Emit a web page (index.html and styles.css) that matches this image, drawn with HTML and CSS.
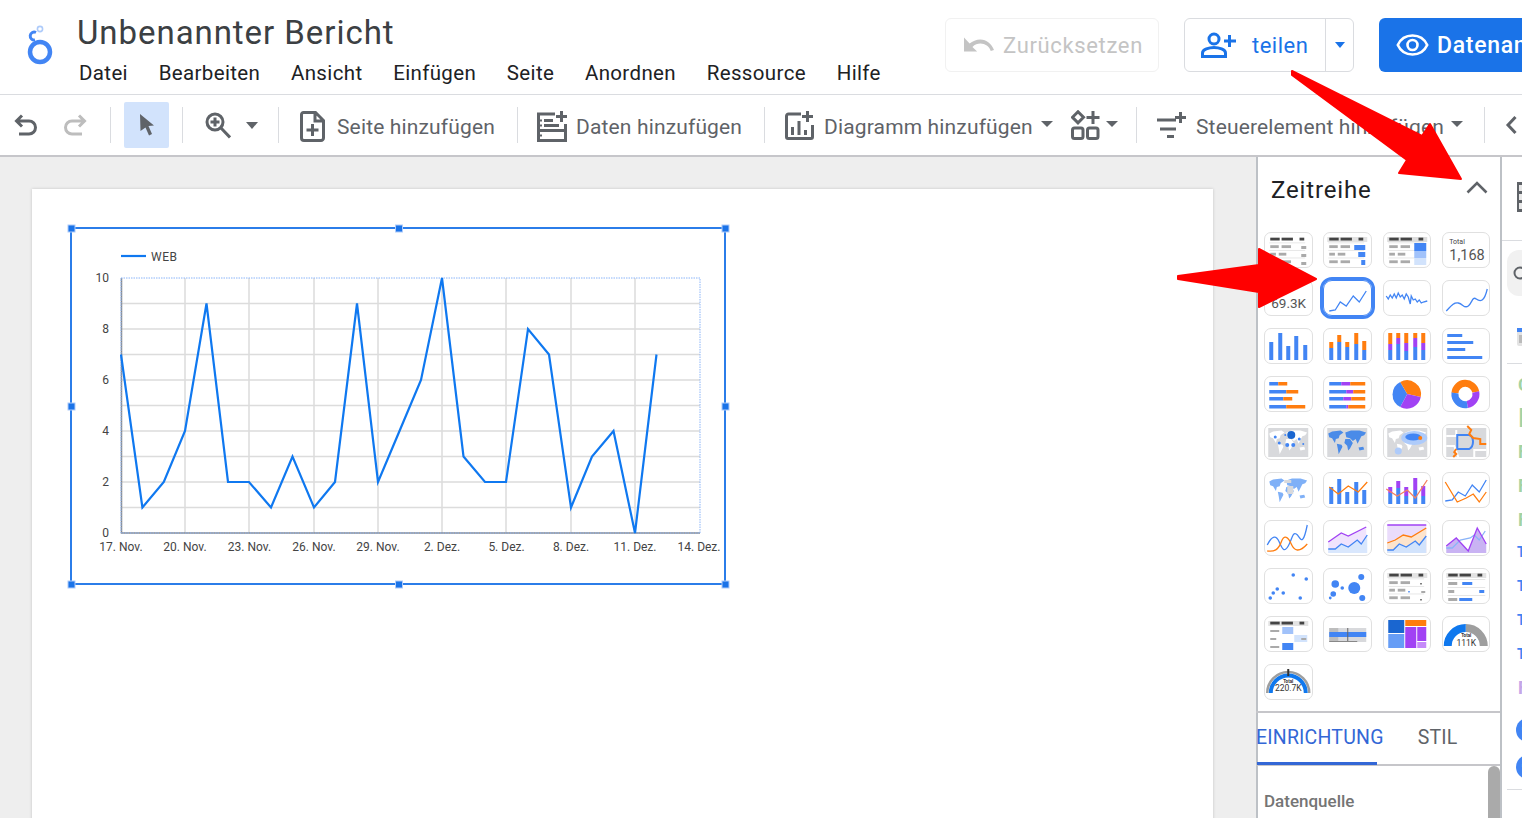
FILE: index.html
```html
<!DOCTYPE html>
<html lang="de">
<head>
<meta charset="utf-8">
<title>Unbenannter Bericht</title>
<link rel="stylesheet" href="styles.css">
</head>
<body>
<svg class="defs" width="0" height="0" aria-hidden="true">
  <defs>
    <symbol id="world" viewBox="0 0 48 36">
      <path d="M5 10 9 8 18 7 21 9 17 12 16 15 13 16 12 20 9 15 6 14Z"/>
      <path d="M14 21 19 22 20 24 17 30 16 32 15 26Z"/>
      <path d="M23 9 29 7 38 7 45 9 43 12 40 13 38 17 36 21 34 16 31 18 28 15 24 14Z"/>
      <path d="M23 16 28 16 31 20 28 26 26 28 25 23 22 20Z"/>
      <path d="M37 25 42 24 43 27 38 28Z"/>
    </symbol>
    <symbol id="thead" viewBox="0 0 48 36">
      <rect x="6" y="6" width="10" height="3" fill="#444"/><rect x="18" y="6" width="12" height="3" fill="#444"/><rect x="37" y="6" width="5" height="3" fill="#444"/>
    </symbol>
    <symbol id="trows" viewBox="0 0 48 36">
      <g fill="#aaa"><rect x="6" y="14" width="9" height="3"/><rect x="18" y="14" width="10" height="3"/><rect x="6" y="22" width="6" height="3"/><rect x="15" y="22" width="8" height="3"/><rect x="6" y="30" width="9" height="3"/><rect x="18" y="30" width="10" height="3"/></g>
      <g fill="#e6e6e6"><rect x="5" y="11" width="38" height="1"/><rect x="5" y="19" width="38" height="1"/><rect x="5" y="27" width="38" height="1"/></g>
    </symbol>
  </defs>
</svg>

<div class="app">
  <header class="topbar">
    <svg class="logo" width="30" height="42" viewBox="0 0 30 42"><circle cx="15" cy="29" r="10" fill="none" stroke="#4285f4" stroke-width="4.5"/><path d="M10 17A4 4 0 1 1 11 9.500" fill="none" stroke="#4285f4" stroke-width="3"/><circle cx="15" cy="6" r="2.600" fill="none" stroke="#aecbfa" stroke-width="1.600"/></svg>
    <div class="doc">
      <div class="doc-title">Unbenannter Bericht</div>
      <nav class="menu">
        <span>Datei</span><span>Bearbeiten</span><span>Ansicht</span><span>Einfügen</span><span>Seite</span><span>Anordnen</span><span>Ressource</span><span>Hilfe</span>
      </nav>
    </div>
    <div class="actions">
      <div class="btn btn-reset">
        <svg width="30" height="18" viewBox="0 0 32 18"><path class="fill-disabled" d="M0 1V16H14L9 11C11.500 8.700 14.500 7.500 17.500 7.500 22.500 7.500 27 10.500 28.500 15.500L32 14.300C29.500 7.500 24 3 17.500 3 13 3 9 4.800 6 7.500Z"/></svg>
        <span>Zurücksetzen</span>
      </div>
      <div class="btn btn-share">
        <div class="share-main">
          <svg width="36" height="26" viewBox="0 0 36 26"><circle cx="13" cy="7" r="5" fill="none" stroke="#1a73e8" stroke-width="3"/><path d="M1.500 24.500V21C1.500 17.500 8 15.500 13 15.500S24.500 17.500 24.500 21V24.500Z" fill="none" stroke="#1a73e8" stroke-width="3"/><path d="M28.500 3V15M23 9H35" stroke="#1a73e8" stroke-width="3"/></svg>
          <span>teilen</span>
        </div>
        <div class="share-drop"><i class="caret caret-blue"></i></div>
      </div>
      <div class="btn btn-view">
        <svg width="33" height="22" viewBox="0 0 33 22"><path d="M1.800 11C4.500 5 10 1.500 16.500 1.500S28.500 5 31.200 11C28.500 17 23 20.500 16.500 20.500S4.500 17 1.800 11Z" fill="none" stroke="#fff" stroke-width="2.600"/><circle cx="16.500" cy="11" r="5" fill="none" stroke="#fff" stroke-width="2.600"/></svg>
        <span>Datenansicht</span>
      </div>
    </div>
  </header>

  <div class="toolbar">
    <div class="group g-history">
      <svg width="24" height="24" viewBox="0 0 24 24"><path class="icon-line" d="M8 2.500 2.500 8 8 13.500M2.500 8H15A6.500 6.500 0 0 1 15 21H5"/></svg>
      <svg width="24" height="24" viewBox="0 0 24 24"><path class="icon-line icon-off" d="M16 2.500 21.500 8 16 13.500M21.500 8H9A6.500 6.500 0 0 0 9 21H19"/></svg>
    </div>
    <i class="sep"></i>
    <div class="group g-select">
      <div class="select-cell"><svg width="16" height="24" viewBox="0 0 16 24"><path d="M1 1 15 12.500 9.500 13 13 21 10 22.500 6.500 14.500 1.500 18Z" fill="#5f6368"/></svg></div>
    </div>
    <i class="sep"></i>
    <div class="group g-zoom">
      <svg width="26" height="27" viewBox="0 0 26 27"><circle cx="10" cy="10" r="8" fill="none" stroke="#5f6368" stroke-width="3"/><path d="M16 16 25 25.500M10 5.500V14.500M5.500 10H14.500" fill="none" stroke="#5f6368" stroke-width="3"/></svg>
      <i class="caret caret-lg"></i>
    </div>
    <i class="sep"></i>
    <div class="group g-page">
      <svg class="nudge" width="25" height="31" viewBox="0 0 25 31"><path class="icon-line" d="M3.500 1.500H15.500L23.500 9.500V27A2.500 2.500 0 0 1 21 29.500H4A2.500 2.500 0 0 1 1.500 27V3.500A2 2 0 0 1 3.500 1.500ZM15 2V10H23M12.500 13V25M6.500 19H18.500"/></svg>
      <span class="tool-label">Seite hinzufügen</span>
    </div>
    <i class="sep"></i>
    <div class="group g-data">
      <svg class="nudge" width="31" height="31" viewBox="0 0 31 31"><path class="icon-line" d="M19 3H2.500V29.500H29.500V13M2.500 19.500H29.500M8 9.500H17M8 14.500H23"/><path class="icon-line" d="M25.500 0V11M20 5.500H31"/><path d="M4 8.500h2v2H4zM4 13.500h2v2H4zM4 23.500h2v2H4z" fill="#5f6368"/></svg>
      <span class="tool-label">Daten hinzufügen</span>
    </div>
    <i class="sep"></i>
    <div class="group g-chart">
      <svg width="29" height="29" viewBox="0 0 29 29"><path class="icon-line" d="M16 3H3.500A2 2 0 0 0 1.500 5V26A1.500 1.500 0 0 0 3 27.500H26A1.500 1.500 0 0 0 27.500 26V14"/><path class="icon-line" d="M22.500 0V11M17 5.500H28M7.500 24V16M14 24V10M20.500 24V19"/></svg>
      <span class="tool-label">Diagramm hinzufügen</span>
      <i class="caret caret-md"></i>
      <svg class="comp-icon" width="29" height="30" viewBox="0 0 29 30"><path class="icon-line" d="M7 1.800 12.500 7.300 7 12.800 1.500 7.300ZM22 1V14M15.500 7.500H28.500"/><rect class="icon-line" x="1.500" y="18" width="10.500" height="10.500" rx="2"/><rect class="icon-line" x="16.500" y="18" width="10.500" height="10.500" rx="2"/></svg>
      <i class="caret caret-md caret-comp"></i>
    </div>
    <i class="sep"></i>
    <div class="group g-ctrl">
      <svg width="29" height="26" viewBox="0 0 29 26"><path class="icon-line" d="M0 8H19M3 17H19M10 24.500H17M23.500 0V11M18 5.500H29"/></svg>
      <span class="tool-label">Steuerelement hinzufügen</span>
      <i class="caret caret-md"></i>
    </div>
    <i class="sep"></i>
    <svg class="collapse" width="12" height="22" viewBox="0 0 12 22"><path class="icon-line" d="M10.500 3 3 11 10.500 19"/></svg>
  </div>

  <main class="workspace">
    <section class="canvas">
      <div class="page">
        <svg class="chart" width="680" height="376" viewBox="60 218 680 376">
          <g class="grid-soft">
            <path d="M185 278V533M249 278V533M314 278V533M378 278V533M442 278V533M506 278V533M571 278V533M635 278V533"/>
            <path d="M121 303.500H700M121 329H700M121 354.500H700M121 380H700M121 405.500H700M121 431H700M121 456.500H700M121 482H700M121 507.500H700"/>
          </g>
          <path class="axis" d="M121.500 278V533H700"/>
          <rect class="plot-edge" x="121" y="278" width="579" height="255"/>
          <polyline class="series" points="121,354.500 142.400,507.500 163.800,482 185,431 206.500,303.500 228,482 249,482 271,507.500 292.500,456.500 314,507.500 335,482 357,303.500 378,482 399.500,431 421,380 442,278 463.500,456.500 485,482 506,482 528,329 549,354.500 571,507.500 592,456.500 613.500,431 635,533 656.500,354.500"/>
          <path class="series" d="M121 256H146"/>
          <text class="chart-text legend-text" x="151" y="261">WEB</text>
          <g class="chart-text y-labels">
            <text x="109" y="282">10</text><text x="109" y="333">8</text><text x="109" y="384">6</text><text x="109" y="435">4</text><text x="109" y="486">2</text><text x="109" y="537">0</text>
          </g>
          <g class="chart-text x-labels">
            <text x="121" y="551">17. Nov.</text><text x="185" y="551">20. Nov.</text><text x="249.500" y="551">23. Nov.</text><text x="314" y="551">26. Nov.</text><text x="378" y="551">29. Nov.</text><text x="442" y="551">2. Dez.</text><text x="506.500" y="551">5. Dez.</text><text x="571" y="551">8. Dez.</text><text x="635" y="551">11. Dez.</text><text x="699" y="551">14. Dez.</text>
          </g>
          <rect class="frame" x="71" y="228" width="654" height="356"/>
          <g class="handles">
            <rect x="68" y="225" width="7" height="7"/><rect x="395.500" y="225" width="7" height="7"/><rect x="722" y="225" width="7" height="7"/>
            <rect x="68" y="403" width="7" height="7"/><rect x="722" y="403" width="7" height="7"/>
            <rect x="68" y="581" width="7" height="7"/><rect x="395.500" y="581" width="7" height="7"/><rect x="722" y="581" width="7" height="7"/>
          </g>
        </svg>
      </div>
    </section>

    <aside class="panel">
      <div class="panel-head">
        <h2>Zeitreihe</h2>
        <svg width="22" height="13" viewBox="0 0 22 13"><path d="M1.500 11.500 11 2 20.500 11.500" fill="none" stroke="#5f6368" stroke-width="2.600"/></svg>
      </div>
      <div class="tiles">
        <div class="tile"><svg viewBox="1 1 46 34"><use href="#thead"/><use href="#trows"/><rect x="37" y="14" width="5" height="3" fill="#aaa"/><rect x="37" y="22" width="5" height="3" fill="#aaa"/><rect x="37" y="30" width="5" height="3" fill="#aaa"/></svg></div>
        <div class="tile"><svg viewBox="1 1 46 34"><rect x="4" y="5" width="40" height="5" fill="#e3e3e3"/><use href="#thead"/><use href="#trows"/><rect x="31" y="13" width="11" height="5" fill="#4285f4"/><rect x="35" y="20" width="7" height="5" fill="#4285f4"/><rect x="38" y="28" width="4" height="5" fill="#4285f4"/></svg></div>
        <div class="tile"><svg viewBox="1 1 46 34"><rect x="4" y="5" width="40" height="5" fill="#ddd"/><use href="#thead"/><use href="#trows"/><rect x="31" y="11" width="12" height="8" fill="#4285f4"/><rect x="31" y="19" width="12" height="7" fill="#a1c2fa"/><rect x="31" y="26" width="12" height="7" fill="#d2e3fc"/></svg></div>
        <div class="tile"><svg viewBox="1 1 46 34"><text class="t-small" x="7" y="12">Total</text><text class="t-big" x="7" y="28">1,168</text></svg></div>

        <div class="tile"><svg viewBox="1 1 46 34"><text class="t-small" x="7" y="12">Total</text><text class="t-mid" x="7" y="27.500">69.3K</text></svg></div>
        <div class="tile tile-on"><svg viewBox="1 1 46 34"><polyline class="l-blue" points="6,31 12,30 17,22 23,26 30,16 36,22 43,11"/></svg></div>
        <div class="tile"><svg viewBox="1 1 46 34"><polyline class="l-blue" points="3,16 5,19 7,15 9,18 11,14 13,18 15,13 17,17 19,15 21,19 23,14 25,17 27,24 28,16 30,20 32,19 34,22 36,20 38,23 40,22 44,21"/></svg></div>
        <div class="tile"><svg viewBox="1 1 46 34"><path class="l-blue" d="M4 31C8 27 11 22 16 23S22 29 26 26 30 16 34 19 42 22 45 9"/></svg></div>

        <div class="tile"><svg viewBox="1 1 46 34"><g class="f-blue"><rect x="5" y="14" width="4" height="18"/><rect x="14" y="5" width="4" height="27"/><rect x="22" y="18" width="4" height="14"/><rect x="30" y="8" width="4" height="24"/><rect x="39" y="17" width="4" height="15"/></g></svg></div>
        <div class="tile"><svg viewBox="1 1 46 34"><g class="f-blue"><rect x="6" y="20" width="4" height="12"/><rect x="14" y="14" width="4" height="18"/><rect x="22" y="19" width="4" height="13"/><rect x="31" y="16" width="4" height="16"/><rect x="39" y="22" width="4" height="10"/></g><g class="f-orange"><rect x="6" y="14" width="4" height="6"/><rect x="14" y="7" width="4" height="7"/><rect x="22" y="14" width="4" height="5"/><rect x="31" y="5" width="4" height="11"/><rect x="39" y="13" width="4" height="9"/></g></svg></div>
        <div class="tile"><svg viewBox="1 1 46 34"><g class="f-orange"><rect x="5" y="5" width="4" height="11"/><rect x="13" y="5" width="4" height="5"/><rect x="21" y="5" width="4" height="10"/><rect x="30" y="5" width="4" height="5"/><rect x="38" y="5" width="4" height="10"/></g><g class="f-purple"><rect x="5" y="16" width="4" height="6"/><rect x="13" y="10" width="4" height="6"/><rect x="21" y="15" width="4" height="8"/><rect x="30" y="10" width="4" height="9"/><rect x="38" y="15" width="4" height="7"/></g><g class="f-blue"><rect x="5" y="22" width="4" height="10"/><rect x="13" y="16" width="4" height="16"/><rect x="21" y="23" width="4" height="9"/><rect x="30" y="19" width="4" height="13"/><rect x="38" y="22" width="4" height="10"/></g></svg></div>
        <div class="tile"><svg viewBox="1 1 46 34"><g class="f-blue"><rect x="5" y="6" width="15" height="3"/><rect x="5" y="13" width="26" height="3"/><rect x="5" y="20" width="18" height="3"/><rect x="5" y="28" width="35" height="3"/></g></svg></div>

        <div class="tile"><svg viewBox="1 1 46 34"><g class="f-blue"><rect x="5" y="6" width="9" height="3.500"/><rect x="5" y="14" width="17" height="3.500"/><rect x="5" y="21" width="14" height="3.500"/><rect x="5" y="29" width="17" height="3.500"/></g><g class="f-orange"><rect x="14" y="6" width="9" height="3.500"/><rect x="22" y="14" width="12" height="3.500"/><rect x="19" y="21" width="9" height="3.500"/><rect x="22" y="29" width="19" height="3.500"/></g></svg></div>
        <div class="tile"><svg viewBox="1 1 46 34"><g class="f-blue"><rect x="6" y="6" width="12" height="3.500"/><rect x="6" y="14" width="17" height="3.500"/><rect x="6" y="21" width="14" height="3.500"/><rect x="6" y="29" width="17" height="3.500"/></g><g class="f-purple"><rect x="18" y="6" width="9" height="3.500"/><rect x="23" y="14" width="7" height="3.500"/><rect x="20" y="21" width="8" height="3.500"/><rect x="23" y="29" width="2" height="3.500"/></g><g class="f-orange"><rect x="27" y="6" width="15" height="3.500"/><rect x="30" y="14" width="12" height="3.500"/><rect x="28" y="21" width="14" height="3.500"/><rect x="25" y="29" width="17" height="3.500"/></g></svg></div>
        <div class="tile"><svg viewBox="1 1 46 34"><path class="f-blue" d="M24 18 17 31A14 14 0 0 1 17 6Z"/><path class="f-orange" d="M24 18 17 6A14 14 0 0 1 37.500 21Z"/><path class="f-purple" d="M24 18 37.500 21A14 14 0 0 1 17 31Z"/></svg></div>
        <div class="tile"><svg viewBox="1 1 46 34"><g fill="none" stroke-width="7"><path stroke="#ff7d0f" d="M12.700 17A10.500 10.500 0 0 1 33.500 16"/><path stroke="#a142f4" d="M33.500 16A10.500 10.500 0 0 1 25 28.500"/><path stroke="#4285f4" d="M25 28.500A10.500 10.500 0 0 1 12.700 17"/></g></svg></div>

        <div class="tile"><svg viewBox="1 1 46 34"><rect x="4" y="4" width="40" height="29" fill="#d8d9dc"/><use href="#world" class="land"/><g class="f-blue"><circle cx="27" cy="11" r="4" fill="#1a66d0"/><circle cx="11" cy="13" r="1.500"/><circle cx="15" cy="19" r="1.500"/><circle cx="23" cy="21" r="2"/><circle cx="29" cy="21" r="2"/><circle cx="35" cy="15" r="1.500"/><circle cx="39" cy="20" r="1"/><circle cx="21" cy="11" r="1"/></g></svg></div>
        <div class="tile"><svg viewBox="1 1 46 34"><rect x="4" y="4" width="40" height="29" fill="#d8d9dc"/><use href="#world" class="land-blue"/></svg></div>
        <div class="tile"><svg viewBox="1 1 46 34"><rect x="4" y="4" width="40" height="29" fill="#d8d9dc"/><use href="#world" class="land"/><ellipse cx="31" cy="14" rx="13" ry="7" fill="#aecbfa"/><ellipse cx="30" cy="13" rx="8" ry="3.500" fill="#4285f4"/><circle cx="37" cy="14" r="2" fill="#ff7d0f"/><circle cx="15" cy="27" r="3.500" fill="#aecbfa"/></svg></div>
        <div class="tile"><svg viewBox="1 1 46 34"><rect x="4" y="4" width="40" height="29" fill="#d8d9dc"/><path d="M4 12H14V6M32 33V26H44M4 22H12L16 33" fill="none" stroke="#fff" stroke-width="2"/><path d="M15 11H27C32 13 32 22 27 25H15Z" fill="none" stroke="#4285f4" stroke-width="2"/><path d="M25 2 29 6 27 10 31 14 38 15V20H44M14 25 12 28 14 30 11 33" fill="none" stroke="#ff7d0f" stroke-width="2"/></svg></div>

        <div class="tile"><svg viewBox="1 1 46 34"><use href="#world" class="land-mix"/><g fill="#d8d9dc"><rect x="20" y="8" width="7" height="3"/><rect x="23" y="14" width="6" height="8"/></g></svg></div>
        <div class="tile"><svg viewBox="1 1 46 34"><g class="f-blue"><rect x="6" y="15" width="4" height="17"/><rect x="14" y="7" width="4" height="25"/><rect x="22" y="20" width="4" height="12"/><rect x="31" y="10" width="4" height="22"/><rect x="39" y="18" width="4" height="14"/></g><polyline class="l-orange" points="6,15 15,22 25,14 35,20 44,10"/></svg></div>
        <div class="tile"><svg viewBox="1 1 46 34"><g class="f-blue"><rect x="5" y="21" width="4" height="11"/><rect x="13" y="16" width="4" height="16"/><rect x="21" y="24" width="4" height="8"/><rect x="30" y="18" width="4" height="14"/><rect x="38" y="24" width="4" height="8"/></g><g class="f-purple"><rect x="5" y="15" width="4" height="6"/><rect x="13" y="9" width="4" height="7"/><rect x="21" y="15" width="4" height="9"/><rect x="30" y="6" width="4" height="12"/><rect x="38" y="14" width="4" height="10"/></g><polyline class="l-salmon" points="3,17 14,24 24,18 32,26 44,8"/></svg></div>
        <div class="tile"><svg viewBox="1 1 46 34"><polyline class="l-blue" points="3,29 10,28 16,20 23,24 30,13 37,20 44,8"/><polyline class="l-orange" points="3,10 15,30 24,26 31,22 37,30 44,20"/></svg></div>

        <div class="tile"><svg viewBox="1 1 46 34"><path class="l-blue" d="M3 25C8 15 12 15 15 22S20 33 24 26 28 12 32 14 38 30 43 5"/><path class="l-orange" d="M3 31C10 32 14 30 17 22S24 17 27 24 35 33 43 24"/></svg></div>
        <div class="tile"><svg viewBox="1 1 46 34"><path d="M5 22 18 13 25 16 43 7V33H5Z" fill="#f0e3fd"/><path d="M5 29 12 29 18 24 25 27 34 20 38 24 44 15V33H5Z" fill="#d9e7fd"/><polyline class="l-purple" points="5,22 18,13 25,16 43,7"/><polyline class="l-blue" points="5,29 12,29 18,24 25,27 34,20 38,24 44,15"/></svg></div>
        <div class="tile"><svg viewBox="1 1 46 34"><rect x="4" y="5" width="39" height="28" fill="#eadcfb"/><path d="M4 23 12 20 20 15 28 17 43 8V33H4Z" fill="#fde4cd"/><path d="M4 30 10 30 16 24 23 27 32 21 36 25 43 16V33H4Z" fill="#d2e3fc"/><path class="l-purple" d="M4 5H43"/><polyline class="l-orange" points="4,23 12,20 20,15 28,17 43,8"/><polyline class="l-blue" points="4,30 10,30 16,24 23,27 32,21 36,25 43,16"/></svg></div>
        <div class="tile"><svg viewBox="1 1 46 34"><path d="M4 26 14 18 26 31 35 8 44 24V33H4Z" fill="#c9b3f3"/><polyline class="l-light" points="4,28 10,28 18,20 28,18 32,15 37,20 43,11"/><polyline class="l-purple" points="4,26 14,18 26,31 35,8 44,24"/></svg></div>

        <div class="tile"><svg viewBox="1 1 46 34"><g class="f-blue"><circle cx="29" cy="7" r="1.800"/><circle cx="42" cy="11" r="1.800"/><circle cx="13" cy="21" r="1.800"/><circle cx="19" cy="25" r="1.800"/><circle cx="9" cy="25" r="1.800"/><circle cx="6" cy="30" r="1.800"/><circle cx="36" cy="30" r="1.800"/></g></svg></div>
        <div class="tile"><svg viewBox="1 1 46 34"><g class="f-blue"><circle cx="38" cy="9" r="3"/><circle cx="12" cy="16" r="3.800"/><circle cx="31" cy="20" r="6"/><circle cx="19" cy="20" r="1.800"/><circle cx="10" cy="26" r="2.800"/><circle cx="39" cy="30" r="3"/><circle cx="7" cy="30" r="1.400"/></g></svg></div>
        <div class="tile"><svg viewBox="1 1 46 34"><rect x="4" y="5" width="40" height="5" fill="#e3e3e3"/><use href="#thead"/><use href="#trows"/><rect x="37" y="15" width="1.500" height="1.500" fill="#555"/><rect x="25" y="23" width="1.500" height="1.500" fill="#4285f4"/><rect x="38" y="23" width="4" height="2" fill="#aaa"/><rect x="37" y="31" width="1.500" height="1.500" fill="#555"/></svg></div>
        <div class="tile"><svg viewBox="1 1 46 34"><rect x="4" y="5" width="40" height="5" fill="#e3e3e3"/><use href="#thead"/><g fill="#aaa"><rect x="6" y="14" width="9" height="3"/><rect x="6" y="22" width="6" height="3"/><rect x="6" y="30" width="9" height="3"/></g><g class="f-blue"><rect x="20" y="14" width="10" height="3"/><rect x="37" y="22" width="5" height="3"/><rect x="17" y="30" width="13" height="3"/></g><g fill="#e6e6e6"><rect x="5" y="11" width="38" height="1"/><rect x="5" y="19" width="38" height="1"/><rect x="5" y="27" width="38" height="1"/></g></svg></div>

        <div class="tile"><svg viewBox="1 1 46 34"><rect x="4" y="5" width="40" height="5" fill="#e3e3e3"/><use href="#thead"/><rect x="18" y="11" width="11" height="7" fill="#a1c2fa"/><rect x="30" y="19" width="13" height="7" fill="#d2e3fc"/><rect x="18" y="27" width="11" height="7" fill="#4285f4"/><g fill="#aaa"><rect x="6" y="14" width="9" height="2"/><rect x="6" y="22" width="6" height="2"/><rect x="6" y="30" width="9" height="2"/><rect x="37" y="22" width="5" height="2"/></g></svg></div>
        <div class="tile"><svg viewBox="1 1 46 34"><rect x="6" y="12" width="37" height="14" fill="#d8d9dc"/><rect x="6" y="12" width="9" height="14" fill="#bdbdbd"/><rect x="6" y="16" width="37" height="5" fill="#4285f4"/><rect x="24" y="12" width="1" height="14" fill="#666"/><rect x="6" y="25" width="28" height="1" fill="#888"/></svg></div>
        <div class="tile"><svg viewBox="1 1 46 34"><rect x="5" y="4" width="16" height="13" fill="#1a66d0"/><rect x="22" y="4" width="21" height="6" fill="#ff7d0f"/><rect x="5" y="18" width="16" height="14" fill="#669df6"/><rect x="22" y="11" width="11" height="21" fill="#a142f4"/><rect x="34" y="11" width="9" height="14" fill="#a142f4"/><rect x="34" y="26" width="9" height="6" fill="#c58af9"/></svg></div>
        <div class="tile"><svg viewBox="1 1 46 34"><path d="M23.500 12A18 18 0 0 1 41.500 30" fill="none" stroke="#9e9e9e" stroke-width="8"/><path d="M5.500 30A18 18 0 0 1 23.500 12" fill="none" stroke="#0f78ee" stroke-width="8"/><text class="t-tiny" x="24" y="21">Total</text><text class="t-gauge" x="24" y="30">111K</text></svg></div>

        <div class="tile"><svg viewBox="1 1 46 34"><path d="M3 29A21 21 0 0 1 45 29" fill="none" stroke="#9e9e9e" stroke-width="2.500"/><path d="M6.500 29A17.500 17.500 0 0 1 41.500 29" fill="none" stroke="#0f78ee" stroke-width="4"/><rect x="23" y="5" width="2" height="7" fill="#333"/><text class="t-tiny" x="24" y="19">Total</text><text class="t-gauge" x="24" y="27">220.7K</text></svg></div>
      </div>
      <div class="tabs">
        <div class="tab tab-on">EINRICHTUNG</div>
        <div class="tab">STIL</div>
      </div>
      <div class="panel-body">
        <h3>Datenquelle</h3>
        <div class="scrollthumb"></div>
      </div>
    </aside>

    <aside class="rail">
      <div class="rail-top"><svg width="8" height="30" viewBox="0 0 8 30"><rect width="8" height="30" fill="#5f6368"/><path d="M2 3h6v6H2zM2 12h6v6H2zM2 21h6v6H2z" fill="#e8e8e8"/></svg></div>
      <div class="rail-search"><svg width="12" height="16" viewBox="0 0 12 16"><circle cx="8" cy="8" r="5.500" fill="none" stroke="#5f6368" stroke-width="2"/></svg></div>
      <div class="rail-source"><svg width="8" height="20" viewBox="0 0 8 20"><rect y="1" width="8" height="18" rx="2" fill="#e3e3e3"/><rect y="1" width="8" height="4" fill="#4285f4"/><rect x="2" y="8" width="6" height="8" fill="#bbb"/></svg></div>
      <ul class="fields">
        <li class="fld-green">C</li><li class="fld-green fld-bar">I</li><li class="fld-green">F</li><li class="fld-green">F</li><li class="fld-green">F</li>
        <li class="fld-blue">T</li><li class="fld-blue">T</li><li class="fld-blue">T</li><li class="fld-blue">T</li><li class="fld-purple">F</li>
      </ul>
      <div class="adders"><span class="adder">+</span><span class="adder">+</span></div>
      <div class="rail-foot"></div>
    </aside>
  </main>

  <svg class="arrows" width="1522" height="818" viewBox="0 0 1522 818" aria-hidden="true">
    <polygon points="1292,71 1422,136 1430,124 1461,179 1399,173 1407,160 1292,75"/>
    <polygon points="1178,276 1259,265 1259,249 1316,279 1259,307 1259,292 1178,279"/>
  </svg>
</div>
</body>
</html>
```

FILE: styles.css
```css
* { box-sizing: border-box; }
html, body { margin: 0; height: 100%; overflow: hidden; background: #fff; }
body { font-family: Roboto, "Liberation Sans", sans-serif; color: #3c4043; }
.defs { position: absolute; }
.app { position: relative; width: 1522px; height: 818px; display: flex; flex-direction: column; overflow: hidden; }

/* top bar */
.topbar { flex: none; height: 95px; display: flex; border-bottom: 1px solid #dadce0; padding-left: 25px; }
.logo { margin-top: 23px; flex: none; }
.doc { margin-left: 22px; padding-top: 12px; }
.doc-title { font-size: 33px; line-height: 42px; color: #3c4043; letter-spacing: .95px; }
.menu { display: flex; gap: 30.700px; padding-left: 2px; margin-top: 4px; font-size: 20.500px; line-height: 30px; color: #202124; letter-spacing: .36px; }
.actions { position: absolute; top: 18px; left: 945px; right: 0; display: flex; gap: 25px; }
.btn { flex: none; height: 54px; display: flex; align-items: center; border-radius: 6px; font-size: 22px; }
.btn svg { flex: none; }
.btn-reset { width: 214px; border: 1px solid #f1f1f1; padding-left: 18px; gap: 9px; color: #c4c4c4; letter-spacing: .65px; }
.fill-disabled { fill: #c4c4c4; }
.btn-share { width: 170px; border: 1px solid #dadce0; color: #1a73e8; letter-spacing: .5px; }
.share-main { flex: none; width: 141px; height: 100%; display: flex; align-items: center; gap: 15px; padding-left: 16px; border-right: 1px solid #dadce0; }
.share-drop { flex: 1; display: flex; justify-content: center; }
.btn-view { width: 170px; background: #1a73e8; color: #fff; padding-left: 17px; gap: 8px; font-size: 23px; letter-spacing: .7px; font-weight: 500; white-space: nowrap; border-radius: 6px 0 0 6px; }

/* carets */
.caret { display: block; flex: none; width: 0; height: 0; border-style: solid; border-color: #5f6368 transparent transparent; border-width: 6px 6px 0; }
.caret-blue { border-top-color: #1a73e8; border-width: 6px 5.500px 0; }
.caret-lg { margin-left: 15px; border-width: 7px 6.500px 0; }
.caret-md { margin-left: 8px; margin-top: -2px; }
.caret-comp { margin-left: 6px; }

/* toolbar */
.toolbar { flex: none; height: 62px; display: flex; align-items: center; border-bottom: 2px solid #c6c6ca; white-space: nowrap; }
.group { height: 100%; display: flex; align-items: center; flex: none; }
.group svg { flex: none; }
.sep { flex: none; width: 1px; height: 36px; background: #dadce0; }
.g-history { width: 110px; padding-left: 14px; gap: 25px; }
.g-select { width: 71px; padding-left: 13px; }
.g-zoom { width: 95px; padding-left: 22px; }
.g-page { width: 238px; padding-left: 21px; gap: 12px; }
.g-data { width: 246px; padding-left: 18px; gap: 9px; }
.g-chart { width: 371px; padding-left: 20px; }
.g-chart .tool-label { margin-left: 10px; width: 209px; }
.comp-icon { margin-left: 18px; }
.g-ctrl { width: 347px; padding-left: 20px; }
.g-ctrl .tool-label { margin-left: 10px; width: 247px; }
.tool-label { font-size: 21px; line-height: 26px; padding-top: 4px; letter-spacing: .15px; color: #5f6368; }
.nudge { margin-top: 2px; }
.select-cell { width: 45px; height: 46px; border-radius: 2px; background: #d2e3fc; display: flex; align-items: center; justify-content: center; }
.icon-line { fill: none; stroke: #5f6368; stroke-width: 3; }
.icon-off { stroke: #bdbdbd; }
.collapse { margin-left: 20px; flex: none; }

/* workspace */
.workspace { flex: 1; min-height: 0; display: flex; }
.canvas { flex: none; width: 1256px; background: #eee; padding: 32px 0 0 32px; overflow: hidden; }
.page { position: relative; width: 1181px; height: 800px; background: #fff; box-shadow: 0 0 3px rgba(0, 0, 0, .18); }
.chart { position: absolute; left: 28px; top: 29px; }
.grid-soft path { fill: none; stroke: #dcdcdc; stroke-width: 1.500; }
.plot-edge { fill: none; stroke: #8ab4f8; stroke-width: 1; stroke-dasharray: 1.500 1; }
.axis { fill: none; stroke: #888; stroke-width: 1.500; }
.series { fill: none; stroke: #0f78f0; stroke-width: 2.200; }
.chart-text { font-size: 12px; fill: #444; font-family: Roboto, sans-serif; }
.legend-text { letter-spacing: .5px; }
.y-labels { text-anchor: end; }
.x-labels { text-anchor: middle; }
.frame { fill: none; stroke: #2b7de9; stroke-width: 2; }
.handles rect { fill: #1a73e8; stroke: #aecbfa; stroke-width: 1; }

/* chart-type panel */
.panel { flex: none; width: 244px; border-left: 2px solid #bdc1c6; display: flex; flex-direction: column; min-height: 0; background: #fff; }
.panel-head { height: 75px; flex: none; display: flex; align-items: flex-start; justify-content: space-between; padding: 19px 12px 0 13px; }
.panel-head h2 { margin: 0; font-size: 24px; line-height: 28px; font-weight: 400; color: #202124; letter-spacing: .85px; }
.panel-head svg { margin-top: 5px; }
.tiles { flex: none; display: grid; grid-template-columns: repeat(4, 48.500px); grid-auto-rows: 36px; column-gap: 10.800px; row-gap: 12px; padding-left: 6px; height: 479px; align-content: start; }
.tile { border: 1px solid #e0e0e0; border-radius: 7px; background: #fff; overflow: hidden; }
.tile svg { display: block; width: 100%; height: 34px; }
.tile-on { outline: 3px solid #4285f4; border-radius: 9px; border-color: #4285f4; }
.t-small { font-size: 7px; fill: #444; }
.t-big { font-size: 14.500px; fill: #555; }
.t-mid { font-size: 13.500px; fill: #555; }
.t-tiny { font-size: 4.500px; font-weight: 700; fill: #333; text-anchor: middle; }
.t-gauge { font-size: 8.500px; fill: #333; text-anchor: middle; }
.f-blue { fill: #4285f4; }
.f-orange { fill: #ff7d0f; }
.f-purple { fill: #a142f4; }
.l-blue, .l-orange, .l-purple, .l-salmon, .l-light { fill: none; stroke-width: 1.300; }
.l-blue { stroke: #4285f4; }
.l-orange { stroke: #ff7d0f; }
.l-purple { stroke: #a142f4; }
.l-salmon { stroke: #f48060; }
.l-light { stroke: #8ab4f8; }
.land { fill: #fff; }
.land-blue { fill: #4a8be8; }
.land-mix { fill: #7fb0f7; }

.tabs { flex: none; height: 55px; display: flex; margin-left: -2px; padding-left: 2px; border-top: 2px solid #c6c6ca; border-bottom: 2px solid #c6c6ca; font-size: 19.500px; line-height: 50px; color: #5f6368; letter-spacing: .2px; }
.tab { margin-right: 34px; }
.tab:first-child { margin-left: -2px; }
.tab-on { position: relative; color: #3367d6; }
.tab-on::after { content: ""; position: absolute; left: 1px; bottom: -1px; width: 120px; height: 3px; background: #3367d6; }
.panel-body { position: relative; flex: 1; min-height: 0; padding: 25px 0 0 6px; overflow: hidden; }
.panel-body h3 { margin: 0; font-size: 17px; line-height: 20px; font-weight: 500; color: #757575; }
.scrollthumb { position: absolute; right: 0; top: 0; width: 12px; height: 70px; border-radius: 6px; background: #aaa; }

/* clipped right rail */
.rail { flex: 1; min-width: 0; border-left: 2px solid #bdc1c6; overflow: hidden; background: #fff; }
.rail-top { height: 84px; padding: 25px 0 0 15px; border-bottom: 1px solid #dadce0; }
.rail-top svg { display: block; }
.rail-search { width: 60px; height: 46px; margin: 9px 0 0 5px; border-radius: 12px; background: #f1f1f1; display: flex; align-items: center; padding-left: 5px; }
.rail-search svg { display: block; }
.rail-source { height: 68px; margin-left: 5px; padding: 31px 0 0 10px; border-bottom: 1px solid #dadce0; width: 60px; }
.rail-source svg { display: block; }
.fields { list-style: none; margin: 4px 0 0; padding: 0 0 0 16px; font-size: 18px; font-weight: 700; }
.fields li { height: 33.700px; line-height: 33.700px; }
.fld-green { color: #a3d3a3; }
.fld-bar { font-size: 26px; }
.fld-blue { color: #4285f4; font-size: 14px; margin-left: -1px; }
.fld-purple { color: #c5a6e8; }
.adders { margin: 13px 0 0 14px; display: flex; flex-direction: column; gap: 13px; }
.adder { width: 24px; height: 24px; border-radius: 50%; background: #4285f4; color: #fff; font-size: 24px; font-weight: 700; line-height: 23px; text-align: center; }
.rail-foot { margin: 10px 0 0 5px; width: 60px; border-top: 1px solid #dadce0; }

/* annotation arrows drawn on top of the screenshot */
.arrows { position: absolute; left: 0; top: 0; pointer-events: none; }
.arrows polygon { fill: #f00; stroke: #f00; stroke-width: 2; stroke-linejoin: round; }
```
